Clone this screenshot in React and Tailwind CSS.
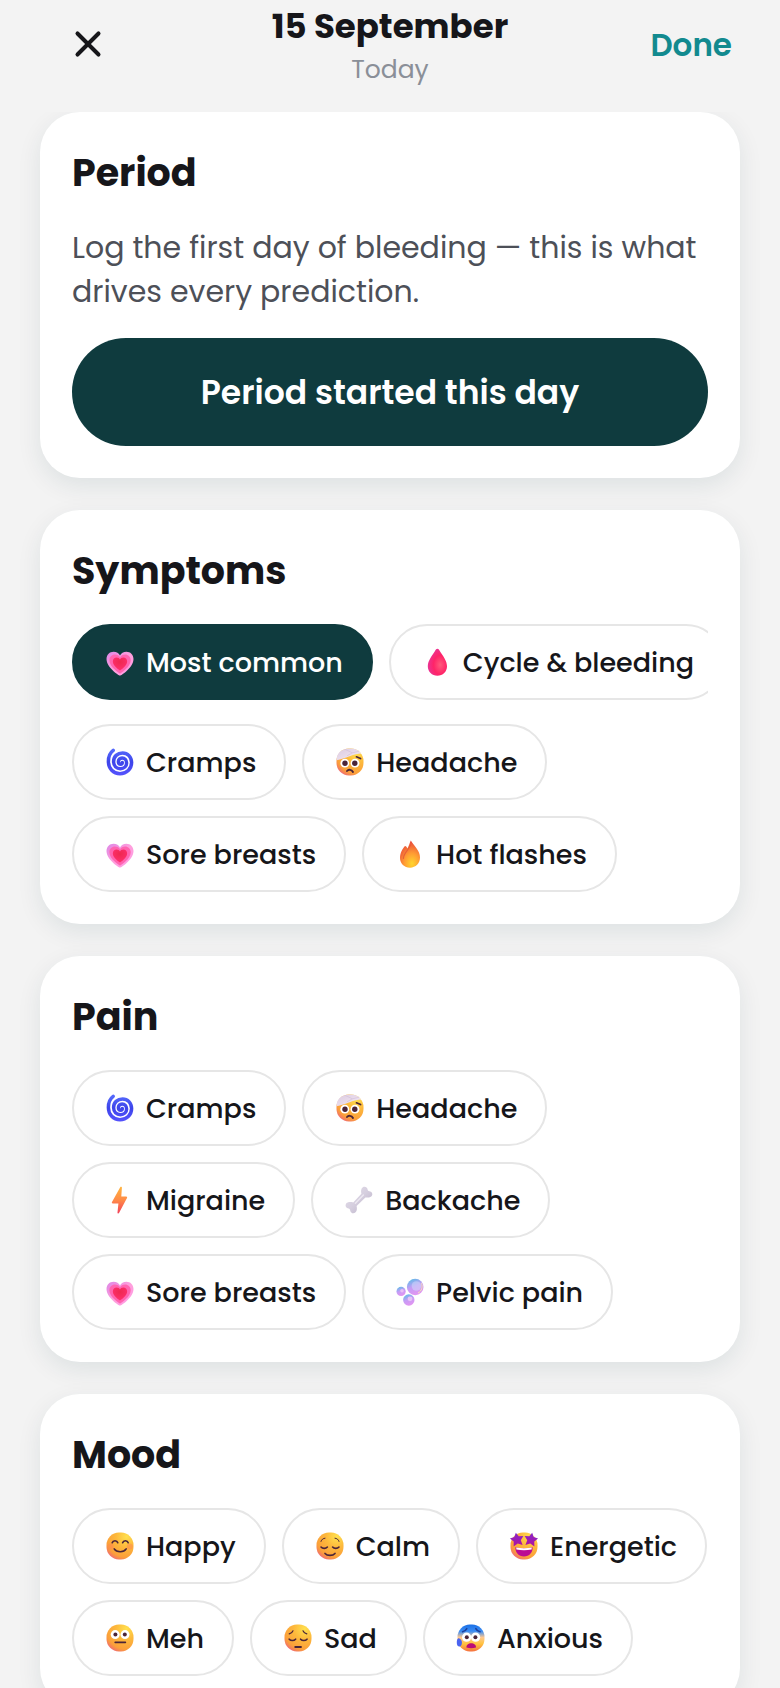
import React, { useState } from 'react';
import { X } from 'lucide-react';
import clsx from 'clsx';

const INK = '#4a2438';
const HEART = 'M16 29.7C15 29.7 2.5 21.5 2.5 13C2.5 8.5 5.8 5.7 9.5 5.7C12.5 5.7 15 7.3 16 9.5C17 7.3 19.5 5.7 22.5 5.7C26.2 5.7 29.5 8.5 29.5 13C29.5 21.5 17 29.7 16 29.7Z';
const STAR = 'M0 -7L2.3 -2.8L7 -2.2L3.7 1.5L4.7 6.6L0 4.4L-4.7 6.6L-3.7 1.5L-7 -2.2L-2.3 -2.8Z';

// Gradients shared by every emoji on the page
function EmojiDefs() {
  return (
    <svg className="absolute size-0" aria-hidden="true">
      <defs>
        <radialGradient id="face" cx="0.74" cy="0.16" r="0.98">
          <stop offset="0" stopColor="#ffe04e" />
          <stop offset="0.4" stopColor="#fdb93c" />
          <stop offset="0.78" stopColor="#fb9f3a" />
          <stop offset="0.9" stopColor="#f47e5c" />
          <stop offset="1" stopColor="#e85a9a" />
        </radialGradient>
        <linearGradient id="faceBlue" x1="0" y1="0" x2="0" y2="1">
          <stop offset="0" stopColor="#1a70e6" />
          <stop offset="0.25" stopColor="#3a8cf4" />
          <stop offset="0.48" stopColor="#ffc890" />
          <stop offset="0.72" stopColor="#ffc23c" />
          <stop offset="1" stopColor="#f5703f" />
        </linearGradient>
        <linearGradient id="bandage" x1="0" y1="0" x2="1" y2="1">
          <stop offset="0" stopColor="#dccbe0" />
          <stop offset="1" stopColor="#f5ebf7" />
        </linearGradient>
        <linearGradient id="heartOuter" x1="0" y1="0" x2="1" y2="1">
          <stop offset="0" stopColor="#dd86e6" />
          <stop offset="0.5" stopColor="#ff9fdc" />
          <stop offset="1" stopColor="#ff9be6" />
        </linearGradient>
        <radialGradient id="heartInner" cx="0.5" cy="0.35" r="0.65">
          <stop offset="0" stopColor="#ee2850" />
          <stop offset="1" stopColor="#ff2f6e" />
        </radialGradient>
        <radialGradient id="drop" cx="0.65" cy="0.6" r="0.7">
          <stop offset="0" stopColor="#ff5a7c" />
          <stop offset="0.5" stopColor="#ff2468" />
          <stop offset="1" stopColor="#e6359c" />
        </radialGradient>
        <linearGradient id="spiral" x1="0" y1="0" x2="0" y2="1">
          <stop offset="0" stopColor="#5468fb" />
          <stop offset="0.5" stopColor="#3d44ea" />
          <stop offset="1" stopColor="#5351fb" />
        </linearGradient>
        <radialGradient id="flame" cx="0.6" cy="0.85" r="0.85">
          <stop offset="0" stopColor="#ffd62e" />
          <stop offset="0.45" stopColor="#ff9c33" />
          <stop offset="1" stopColor="#e8453c" />
        </radialGradient>
        <linearGradient id="bolt" x1="0" y1="0" x2="0" y2="1">
          <stop offset="0" stopColor="#ffb43d" />
          <stop offset="0.5" stopColor="#ff8a48" />
          <stop offset="1" stopColor="#f2405a" />
        </linearGradient>
        <linearGradient id="bone" x1="0" y1="0" x2="1" y2="1">
          <stop offset="0" stopColor="#e6e0ec" />
          <stop offset="0.5" stopColor="#d5cede" />
          <stop offset="1" stopColor="#b8adc6" />
        </linearGradient>
        <linearGradient id="bubble" x1="0.3" y1="0" x2="0.7" y2="1">
          <stop offset="0" stopColor="#62bbe8" />
          <stop offset="0.45" stopColor="#c59cf6" />
          <stop offset="1" stopColor="#e694f0" />
        </linearGradient>
        <linearGradient id="star" x1="0" y1="0" x2="0" y2="1">
          <stop offset="0" stopColor="#8526cc" />
          <stop offset="1" stopColor="#b0129f" />
        </linearGradient>
      </defs>
    </svg>
  );
}

function Face({ fill = 'url(#face)' }) {
  return <rect x="2.5" y="2.5" width="27" height="27" rx="12.4" fill={fill} />;
}

function Eyes({ left, right, y, r = 4.4, pupil = 2.1 }) {
  return (
    <>
      <circle cx={left} cy={y} r={r} fill="#fff" />
      <circle cx={right} cy={y} r={r} fill="#fff" />
      <circle cx={left + 0.2} cy={y} r={pupil} fill={INK} />
      <circle cx={right - 0.2} cy={y} r={pupil} fill={INK} />
    </>
  );
}

function Line({ d, color = INK, width = 1.6 }) {
  return <path d={d} fill="none" stroke={color} strokeWidth={width} strokeLinecap="round" strokeLinejoin="round" />;
}

const emojis = {
  heart: (
    <>
      <path d={HEART} fill="url(#heartOuter)" />
      <path d={HEART} fill="#ff64b0" transform="translate(3.4 4.1) scale(0.79)" />
      <path d={HEART} fill="url(#heartInner)" transform="translate(7.5 8.5) scale(0.53)" />
    </>
  ),
  drop: (
    <path d="M16.4 2.7C17.4 2.7 18 3.6 18.8 5C21.6 9.6 26 14.6 26 20.2C26 25.6 21.8 29.7 16.4 29.7C11 29.7 6.8 25.6 6.8 20.2C6.8 14.6 11.2 9.6 14 5C14.8 3.6 15.4 2.7 16.4 2.7Z" fill="url(#drop)" />
  ),
  spiral: (
    <path
      d="M9.2 4.4C6 6.8 4.4 10.8 4.4 15.4C4.4 22.6 9.3 27.7 16 27.7C22.6 27.7 27.6 23 27.6 16.6C27.6 11 23.6 6.9 18.6 6.9C13.4 6.9 9.6 10.6 9.6 15.6C9.6 19.9 12.5 22.7 16.4 22.7C20 22.7 22.6 20.3 22.6 16.9C22.6 14 20.7 11.9 18.1 11.9C15.8 11.9 14.4 13.5 14.4 15.5C14.4 17.2 15.4 18.2 16.7 18.2C17.8 18.2 18.3 17.5 18.3 16.6"
      fill="none"
      stroke="url(#spiral)"
      strokeWidth="3.5"
      strokeLinecap="round"
    />
  ),
  bandage: (
    <>
      <Face />
      <Eyes left={10.8} right={21} y={17.2} r={4.4} pupil={2.7} />
      <Line d="M13 25C14.4 23.2 17.6 23.4 19 26" width={1.9} />
      <Line d="M22.4 10.8L26.6 12.6" />
      <path d="M2.6 14.2C2.4 6.8 8 2.5 16 2.5C21.4 2.5 25.2 4.4 27.2 7.6C24 8 20.4 8.6 15.6 10.2C11 11.8 7.2 13.6 2.6 14.2Z" fill="url(#bandage)" />
      <path d="M11 3.4L18.4 6.8L25.2 5.2M18.4 6.8L13 9.8" fill="none" stroke="#d0bdd8" strokeWidth="0.6" />
    </>
  ),
  flame: (
    <>
      <path d="M11 8C8.6 10.4 6 14.8 6 19.8C6 25.8 10.4 29.7 16 29.7C21.8 29.7 26 25.4 26 19.6C26 12.8 20.6 8.6 16.8 2.6C15.4 5.6 15.2 7.6 13.4 10.4C12.8 9 12.2 8.2 11 8Z" fill="url(#flame)" />
      <path d="M16.4 7C15.4 11.4 9.6 14.6 9.4 20.4" fill="none" stroke="#df4f38" strokeWidth="1.1" strokeLinecap="round" opacity="0.7" />
      <path d="M11.4 9.4C9.6 12 8 14.4 7.6 17.8" fill="none" stroke="#f26a38" strokeWidth="1" strokeLinecap="round" />
    </>
  ),
  bolt: (
    <path d="M16.2 3.2C16.8 2.4 18 2.8 17.9 3.8L17.3 12.6H22.2C23 12.6 23.4 13.4 23 14L15 29C14.5 29.8 13.4 29.5 13.5 28.5L14.4 19.4H8.8C8 19.4 7.6 18.7 8 18Z" fill="url(#bolt)" />
  ),
  bone: (
    <>
      <path d="M10.2 18.4L18.4 9.8C17.8 7.4 17.8 4.6 19.8 3.2C21.8 2 24.2 3 24.6 5.4C24.8 6.4 25.4 7 26.4 7.2C28.8 7.6 30 9.6 29 11.6C27.8 13.8 25 13.8 22.4 13.4L13.6 22C14.2 24.6 14 27.6 12 28.8C10 30 7.6 28.8 7.2 26.4C7 25.4 6.4 24.8 5.6 24.6C3.2 24.2 2 22.2 2.8 20.2C3.8 18 7.4 17.8 10.2 18.4Z" fill="url(#bone)" />
      <path d="M12.4 19.2L20.4 11" fill="none" stroke="#ece8f1" strokeWidth="1.4" strokeLinecap="round" />
    </>
  ),
  bubbles: (
    <>
      <circle cx="21.2" cy="11" r="8.3" fill="url(#bubble)" />
      <circle cx="22.4" cy="10" r="4.8" fill="#cfe0fb" opacity="0.5" />
      <path d="M27.6 7.6C29 11 27.6 15 24.4 16.8" fill="none" stroke="#f6e6b4" strokeWidth="1" strokeLinecap="round" />
      <circle cx="7.1" cy="15.4" r="4.6" fill="url(#bubble)" />
      <circle cx="8" cy="14.8" r="1.8" fill="#f1c9f6" opacity="0.8" />
      <circle cx="14.8" cy="24" r="5.7" fill="url(#bubble)" />
      <circle cx="16" cy="22.8" r="2.4" fill="#f0cdf8" opacity="0.8" />
    </>
  ),
  happy: (
    <>
      <Face />
      <circle cx="6.6" cy="16.6" r="3" fill="#ff8552" opacity="0.5" />
      <circle cx="25.8" cy="16.6" r="3" fill="#ff8552" opacity="0.5" />
      <Line d="M8.2 12.8C9 10 13 10 13.8 12.8" />
      <Line d="M18.6 12.8C19.4 10 23.4 10 24.2 12.8" />
      <Line d="M10.2 18.9C12.6 22.7 19.8 22.7 22.2 18.9" />
    </>
  ),
  calm: (
    <>
      <Face />
      <Line d="M7 11.4C7.6 9.4 9.2 8.3 11 8.2" width={1} />
      <Line d="M25 11.4C24.4 9.4 22.8 8.3 21 8.2" width={1} />
      <Line d="M7 17C8.6 18.8 11.8 18.8 13.4 17" />
      <Line d="M18.6 17C20.2 18.8 23.4 18.8 25 17" />
      <Line d="M11 23.4C13.2 26 18.8 26 21 23.4" />
    </>
  ),
  starstruck: (
    <>
      <Face />
      <path d={STAR} fill="url(#star)" transform="translate(9 9.4) rotate(-10) scale(0.97)" />
      <path d={STAR} fill="url(#star)" transform="translate(23 9.4) rotate(10) scale(0.97)" />
      <path d="M7.4 17.2C13 18.4 19 18.4 24.6 17.2C24.8 22.4 21.4 26.4 16 26.4C10.6 26.4 7.2 22.4 7.4 17.2Z" fill="#bb0a93" />
      <path d="M8.2 17.6C13 18.6 19 18.6 23.8 17.6L23.6 19.6C18.8 20.6 13.2 20.6 8.4 19.6Z" fill="#fff" />
    </>
  ),
  meh: (
    <>
      <Face />
      <Eyes left={11.2} right={21} y={12.6} r={4.5} pupil={2} />
      <Line d="M11.2 20.4H21.4" />
    </>
  ),
  sad: (
    <>
      <Face />
      <Line d="M7.2 11.8C9 11.4 10.4 10.4 11 8.8" width={1.2} />
      <Line d="M24.8 11.8C23 11.4 21.6 10.4 21 8.8" width={1.2} />
      <Line d="M7.2 17.2C8.8 19 12 19 13.6 17.2" />
      <Line d="M18.6 17.2C20.2 19 23.4 19 25 17.2" />
      <Line d="M13.2 25H19" width={1.8} />
    </>
  ),
  anxious: (
    <>
      <Face fill="url(#faceBlue)" />
      <Line d="M7.6 9.8C9.4 9.4 11 8.2 11.8 6.6" color="#1c3f9c" />
      <Line d="M25 9.8C23.2 9.4 21.6 8.2 20.8 6.6" color="#1c3f9c" />
      <Eyes left={11.6} right={20.6} y={15.2} r={4.6} pupil={2} />
      <path d="M11.4 25.6C11.2 22.8 13.4 21.2 16.2 21.2C19 21.2 21.2 22.8 21 25.6C18 26.4 14.4 26.4 11.4 25.6Z" fill="#bb0a78" />
      <path d="M3 16.4C4.2 15.8 5.8 17.2 6.6 18.8C7.4 21 6.6 24.6 4.4 24.6C2.6 24.6 1.8 23 1.8 20.6C1.8 18.8 2 17 3 16.4Z" fill="#4a63f0" />
    </>
  )
};

const symptomFilters = [
  { label: 'Most common', emoji: 'heart' },
  { label: 'Cycle & bleeding', emoji: 'drop' }
];

const symptoms = [
  { label: 'Cramps', emoji: 'spiral' },
  { label: 'Headache', emoji: 'bandage' },
  { label: 'Sore breasts', emoji: 'heart' },
  { label: 'Hot flashes', emoji: 'flame' }
];

const pains = [
  { label: 'Cramps', emoji: 'spiral' },
  { label: 'Headache', emoji: 'bandage' },
  { label: 'Migraine', emoji: 'bolt' },
  { label: 'Backache', emoji: 'bone' },
  { label: 'Sore breasts', emoji: 'heart' },
  { label: 'Pelvic pain', emoji: 'bubbles' }
];

const moods = [
  { label: 'Happy', emoji: 'happy' },
  { label: 'Calm', emoji: 'calm' },
  { label: 'Energetic', emoji: 'starstruck' },
  { label: 'Meh', emoji: 'meh' },
  { label: 'Sad', emoji: 'sad' },
  { label: 'Anxious', emoji: 'anxious' }
];

function Chip({ label, emoji, selected, onClick }) {
  return (
    <button
      type="button"
      aria-pressed={selected}
      onClick={onClick}
      className={clsx(
        'flex h-[76px] shrink-0 items-center gap-2.5 rounded-full border-2 pr-7 pl-[30px] text-[27px] font-medium whitespace-nowrap',
        selected ? 'border-[#0f3b3e] bg-[#0f3b3e] text-white' : 'border-[#e6e6e6] bg-white text-[#16161a]'
      )}
    >
      <svg viewBox="0 0 32 32" className="size-8 shrink-0" aria-hidden="true">{emojis[emoji]}</svg>
      <span className="pt-0.5">{label}</span>
    </button>
  );
}

function Card({ title, children }) {
  return (
    <section className="rounded-[40px] bg-white p-8 shadow-[0_8px_24px_rgba(15,59,62,0.09)]">
      <h2 className="mb-6 text-[38px] leading-[58px] font-bold text-[#16161a]">{title}</h2>
      {children}
    </section>
  );
}

function ChipGroup({ items }) {
  const [picked, setPicked] = useState([]);

  const toggle = (label) => {
    setPicked((prev) => (prev.includes(label) ? prev.filter((item) => item !== label) : [...prev, label]));
  };

  return (
    <div className="flex flex-wrap gap-4">
      {items.map((item) => (
        <Chip key={item.label} {...item} selected={picked.includes(item.label)} onClick={() => toggle(item.label)} />
      ))}
    </div>
  );
}

function App() {
  const [filter, setFilter] = useState('Most common');

  return (
    <div className="flex h-screen flex-col overflow-hidden bg-[#f3f3f3] font-[Poppins,Inter,sans-serif]">
      <EmojiDefs />
      <header className="grid grid-cols-[1fr_auto_1fr] items-center px-12 pb-6">
        <button type="button" aria-label="Close" className="flex size-20 items-center justify-center text-[#16161a]">
          <X size={42} strokeWidth={2.3} />
        </button>
        <div className="text-center">
          <h1 className="text-[34px] leading-[52px] font-bold text-[#16161a]">15 September</h1>
          <p className="text-[25px] leading-9 text-[#8a8f98]">Today</p>
        </div>
        <button type="button" className="justify-self-end pt-0.5 text-[31px] font-semibold text-[#128a8f]">Done</button>
      </header>

      <main className="min-h-0 flex-1 overflow-y-auto px-10 [scrollbar-width:none]">
        <div className="flex flex-col gap-8 pb-8">
          <Card title="Period">
            <p className="mb-6 text-[30px] leading-[44px] text-[#4d5058]">
              Log the first day of bleeding — this is what drives every prediction.
            </p>
            <button type="button" className="h-[108px] w-full rounded-full bg-[#0f3b3e] pt-0.5 text-[33px] font-semibold text-white">
              Period started this day
            </button>
          </Card>

          <Card title="Symptoms">
            <div className="mb-6 flex gap-4 overflow-x-auto [scrollbar-width:none]">
              {symptomFilters.map((item) => (
                <Chip key={item.label} {...item} selected={filter === item.label} onClick={() => setFilter(item.label)} />
              ))}
            </div>
            <ChipGroup items={symptoms} />
          </Card>

          <Card title="Pain">
            <ChipGroup items={pains} />
          </Card>

          <Card title="Mood">
            <ChipGroup items={moods} />
          </Card>
        </div>
      </main>
    </div>
  );
}

export default App;
